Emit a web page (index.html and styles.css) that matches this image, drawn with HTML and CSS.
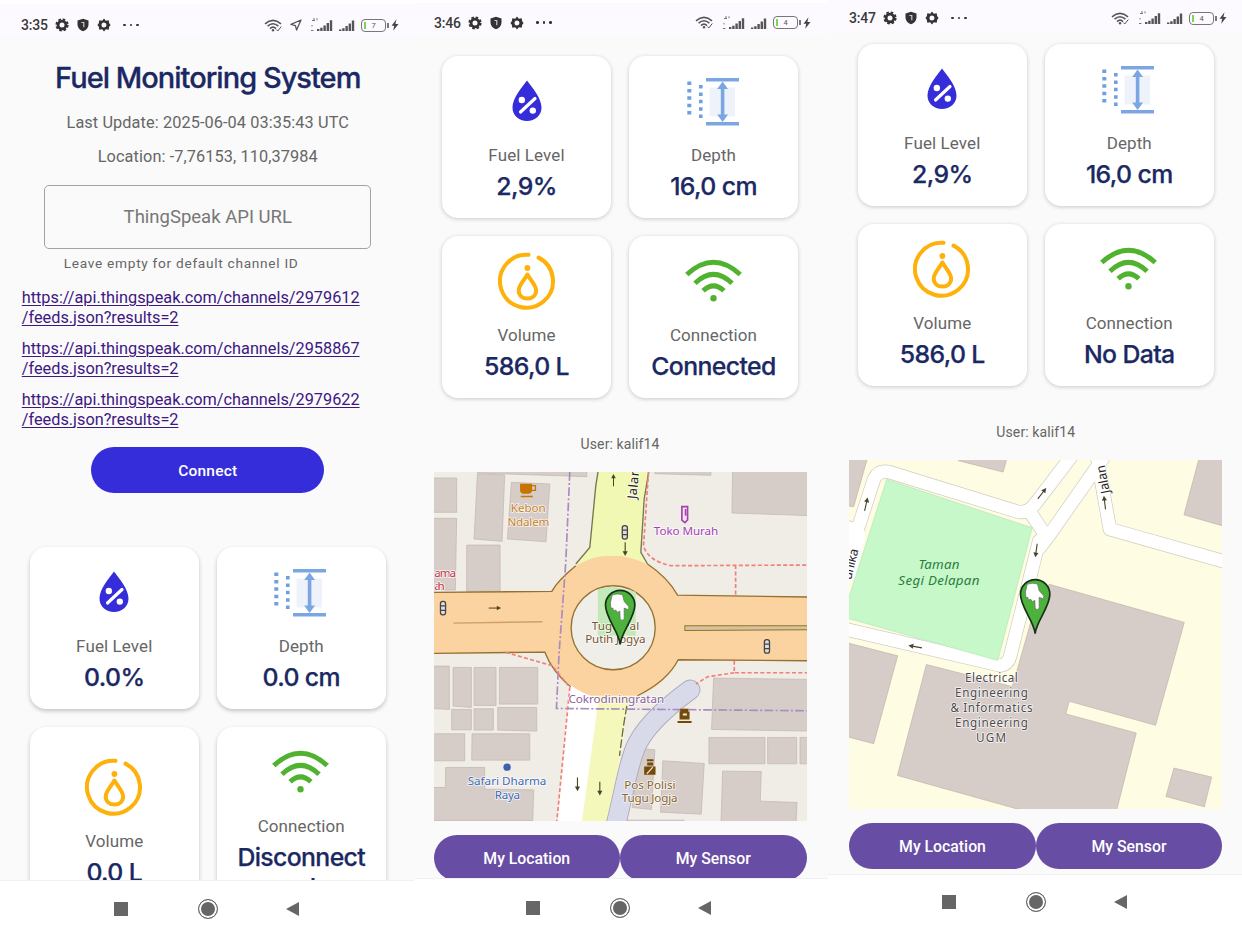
FILE: index.html
```html
<!DOCTYPE html>
<html lang="en">
<head>
<meta charset="utf-8">
<title>Fuel Monitoring System</title>
<link rel="stylesheet" href="styles.css">
</head>
<body>
<svg class="defs" aria-hidden="true">
  <symbol id="cog" viewBox="0 0 14 14"><circle cx="7" cy="7" r="3.900" fill="none" stroke="#333" stroke-width="2.800"/><circle cx="7" cy="7" r="5.700" fill="none" stroke="#333" stroke-width="1.800" stroke-dasharray="2.600 1.880"/></symbol>
  <symbol id="gear" viewBox="0 0 14 14"><path d="M7 .5 8.800 2.700l2.900-.4.5 2.900L13.600 7l-1.400 1.800-.5 2.900-2.900-.4L7 13.500 5.200 11.300l-2.900.4-.5-2.900L.4 7l1.400-1.800.5-2.900 2.900.4zM7 4.500a2.500 2.500 0 1 0 0 5 2.500 2.500 0 0 0 0-5z" fill="#333" fill-rule="evenodd"/></symbol>
  <symbol id="shield" viewBox="0 0 14 14"><path d="M7 .8 12.500 2.600v4.200c0 3-2.300 5.300-5.500 6.500C3.800 12.100 1.500 9.800 1.500 6.800V2.600z" fill="#333"/><path d="M5.400 4.500h2.400v4.800" fill="none" stroke="#ccc" stroke-width="1.200"/></symbol>
  <symbol id="wifi-small" viewBox="0 0 19 13"><g fill="none" stroke="#555" stroke-width="1.600"><path d="M1 4.800Q9-1.900 17 4.800"/><path d="M3.600 7.200Q9 2.300 14.400 7.200"/><path d="M6 9.600Q9 6.800 12 9.600"/><path d="M12.300 10.500l1.500 1.500 3.500-4.500" stroke-width="1"/></g><circle cx="9" cy="11.300" r="1.200" fill="#555"/></symbol>
  <symbol id="arrow-nav" viewBox="0 0 12 12"><path d="M11 1 1 5.400l4.400 1.200L6.600 11z" fill="none" stroke="#555" stroke-width="1.300" stroke-linejoin="round"/></symbol>
  <symbol id="signal-4g" viewBox="0 0 22 14"><path d="M6 13v-2h2.400v2zm3.200 0V9.700h2.400V13zm3.200 0V7.500h2.400V13zm3.200 0V5h2.400v8zm3.200 0V2.200h2.400V13z" fill="#555"/><path d="M3 0v2.500M1 2.500h3M6 .3v2M1 7v1.500M0 12.500h2.500" stroke="#777" fill="none"/></symbol>
  <symbol id="signal" viewBox="0 0 16 14"><path d="M0 13v-1.500h2.400V13zm3.200 0v-2.800h2.400V13zm3.200 0V8h2.400v5zm3.200 0V5.500h2.400V13zm3.200 0V2.500h2.400V13z" fill="#555"/></symbol>
  <symbol id="bolt" viewBox="0 0 8 12"><path d="M5.500.3.5 6.700h2.700L2.200 11.700 7.500 5H4.400z" fill="#444"/></symbol>
  <symbol id="drop" viewBox="0 0 58 58"><path d="M29 8.500C34 15.300 43.500 26 43.500 35.500 43.500 43.500 37 49 29 49S14.500 43.500 14.500 35.500C14.500 26 24 15.300 29 8.500z" fill="#352cda"/><path d="M22.500 40 37 26.500" stroke="#fff" stroke-width="3.200" stroke-linecap="round"/><circle cx="23.800" cy="28" r="3.200" fill="#fff"/><circle cx="34.800" cy="38.600" r="3.200" fill="#fff"/></symbol>
  <symbol id="depth" viewBox="0 0 58 58"><g transform="translate(-1 .5)"><path d="M25.500 15h25.500v29H25.500z" fill="#eef2fb"/><path d="M22 7.300h33M22 51.300h33" stroke="#7ba6e2" stroke-width="3.400"/><path d="M38.600 13v33" stroke="#7ba6e2" stroke-width="3.600"/><path d="M38.600 9 44 16.500H33.200zM38.600 49.500 44 42H33.200z" fill="#7ba6e2"/><path d="M5.300 9v35" stroke="#6f9fdf" stroke-width="4" stroke-dasharray="3.500 3.900"/><path d="M16.800 12.500v35" stroke="#6f9fdf" stroke-width="3.600" stroke-dasharray="3.500 3.900"/></g></symbol>
  <symbol id="volume" viewBox="0 0 58 58"><g fill="none" stroke="#fdb10a" stroke-width="4" stroke-linecap="round"><path d="M30.500 2.800A26.500 26.500 0 1 0 40.500 5.600" /><path d="M29.400 22.500C26 28.500 20.700 33.400 20.700 38.500c0 5 3.900 8 8.700 8s8.700-3 8.700-8c0-5.100-5.300-10-8.700-16z" stroke-linejoin="round"/></g><circle cx="29.400" cy="16" r="2.900" fill="#fdb10a"/></symbol>
  <symbol id="wifi" viewBox="0 0 58 58"><g fill="none" stroke="#50b22f" stroke-width="5"><path d="M1.800 22.500Q28.500-2 55.200 22.500"/><path d="M10 31.300Q28.500 13.500 47 31.300"/><path d="M18.100 38.800Q28.500 29 38.900 38.800"/></g><circle cx="28.500" cy="46.300" r="3.200" fill="#50b22f"/></symbol>
  <symbol id="pin" viewBox="0 0 94 168" overflow="visible"><path d="M47 165C44 128 3 86 3 47a44 44 0 0 1 88 0C91 86 50 128 47 165z" fill="#4cb23c" stroke="#16301a" stroke-width="5"/><path d="M23 17Q38 11 54 16L59 36 73 52 72 61 59 56V88Q53 97 47 88L46 65 39 69 34 62 27 64 25 56 19 56 18 40z" fill="#fff" stroke="#666" stroke-width="2" stroke-linejoin="round"/></symbol>
  <symbol id="way" viewBox="0 0 44 20" overflow="visible"><path d="M0 10h36" stroke-width="3.500" stroke="#4a4428"/><path d="M28 2 43 10 28 18z" fill="#4a4428"/></symbol>
  <symbol id="light" viewBox="0 0 20 46" overflow="visible"><rect x="2" y="2" width="16" height="42" rx="7" fill="#ddd" stroke="#444" stroke-width="4"/><path d="M3 16h14M3 30h14" stroke="#444" stroke-width="4"/></symbol>
</svg>

<main class="board">
  <section class="phone phone-setup">
    <header class="status">
      <span class="clock">3:35</span>
      <svg class="s-icon"><use href="#cog"/></svg><svg class="s-icon"><use href="#shield"/></svg><svg class="s-icon"><use href="#gear"/></svg>
      <span class="dots"><i></i><i></i><i></i></span>
      <span class="right"><svg class="s-wifi"><use href="#wifi-small"/></svg><svg class="s-nav"><use href="#arrow-nav"/></svg><svg class="s-4g"><use href="#signal-4g"/></svg><svg class="s-sig"><use href="#signal"/></svg><span class="battery">7</span><svg class="s-bolt"><use href="#bolt"/></svg></span>
    </header>
    <div class="screen">
      <h1 class="title">Fuel Monitoring System</h1>
      <p class="meta update">Last Update: 2025-06-04 03:35:43 UTC</p>
      <p class="meta place">Location: -7,76153, 110,37984</p>
      <div class="field">ThingSpeak API URL</div>
      <p class="helper">Leave empty for default channel ID</p>
      <nav class="links">
        <a href="#">https://api.thingspeak.com/channels/2979612<br>/feeds.json?results=2</a>
        <a href="#">https://api.thingspeak.com/channels/2958867<br>/feeds.json?results=2</a>
        <a href="#">https://api.thingspeak.com/channels/2979622<br>/feeds.json?results=2</a>
      </nav>
      <button class="connect">Connect</button>
      <div class="cards">
        <article class="card"><svg class="icon"><use href="#drop"/></svg><span class="label">Fuel Level</span><strong class="value">0.0%</strong></article>
        <article class="card"><svg class="icon"><use href="#depth"/></svg><span class="label">Depth</span><strong class="value">0.0 cm</strong></article>
        <article class="card"><svg class="icon"><use href="#volume"/></svg><span class="label">Volume</span><strong class="value">0.0 L</strong></article>
        <article class="card"><svg class="icon"><use href="#wifi"/></svg><span class="label">Connection</span><strong class="value">Disconnect<br>ed</strong></article>
      </div>
    </div>
    <footer class="navbar"><i class="square"></i><i class="home"></i><i class="back"></i></footer>
  </section>

  <section class="phone phone-connected">
    <header class="status">
      <span class="clock">3:46</span>
      <svg class="s-icon"><use href="#cog"/></svg><svg class="s-icon"><use href="#shield"/></svg><svg class="s-icon"><use href="#gear"/></svg>
      <span class="dots"><i></i><i></i><i></i></span>
      <span class="right"><svg class="s-wifi"><use href="#wifi-small"/></svg><svg class="s-4g"><use href="#signal-4g"/></svg><svg class="s-sig"><use href="#signal"/></svg><span class="battery">4</span><svg class="s-bolt"><use href="#bolt"/></svg></span>
    </header>
    <div class="screen">
      <div class="cards">
        <article class="card"><svg class="icon"><use href="#drop"/></svg><span class="label">Fuel Level</span><strong class="value">2,9%</strong></article>
        <article class="card"><svg class="icon"><use href="#depth"/></svg><span class="label">Depth</span><strong class="value">16,0 cm</strong></article>
        <article class="card"><svg class="icon"><use href="#volume"/></svg><span class="label">Volume</span><strong class="value">586,0 L</strong></article>
        <article class="card"><svg class="icon"><use href="#wifi"/></svg><span class="label">Connection</span><strong class="value">Connected</strong></article>
      </div>
      <p class="user">User: kalif14</p>
      <svg class="map" viewBox="30 19 1118 1048" preserveAspectRatio="none">
        <rect x="30" y="19" width="1118" height="1048" fill="#f0ede7"/>
        <g fill="#d7cdc8" stroke="#bfb2ac" stroke-width="2">
          <path d="M20 37H98V140H20zM20 158H98L94 373H20zM160 25l82 3-8 199-84-7zM262 50l115 5-11 173-116-8zM128 238H228V377H128zM160 10H488V33L160 22zM692 10H860V29L692 24zM925 10h235v140L923 142z"/>
          <path d="M20 601H76V731L20 728zM87 605h55v120l-55-4zM150 605h66v114h-66zM226 605h115v110H226zM83 731h59v61H83zM150 729h58v64h-58zM221 725h117v71l-117-3zM20 804h102v81H20zM144 804h173v79H143zM65 905h117v65l147 2-3 92H20V965h44z"/>
          <path d="M868 637l290 4v155l-296-5zM854 815h168v79H854zM1030 815h87v79h-87zM1127 815h30v79h-30zM716 885l124 8-9 152-122-6zM648 848l44 4-10 179-58-6zM895 916l116 1-3 89 110 4-3 67H890zM598 1063H780v10H598z"/>
        </g>
        <path d="M437 650H620L560 1070H400z" fill="#fff"/>
        <path d="M525 690H615L598 800 560 1070H473z" fill="#f4f8bb"/>
        <path d="M523 10 515 60 497 245 455 300 670 300 650 260 660 100 675 10z" fill="#f1f8b4"/>
        <path d="M523 10 515 60 497 245 455 295M675 10 660 100 650 260 670 295" fill="none" stroke="#77764d" stroke-width="4"/>
        <path d="M798 672C735 718 660 780 632 850 606 920 598 990 574 1080" fill="none" stroke="#a6a8b8" stroke-width="61" stroke-linecap="round"/>
        <path d="M798 672C735 718 660 780 632 850 606 920 598 990 574 1080" fill="none" stroke="#d8d9e9" stroke-width="56" stroke-linecap="round"/>
        <path d="M608 720 598 780 586 870" stroke="#6b6b3c" stroke-width="4" stroke-dasharray="26 8" fill="none"/>
        <path d="M20 380 383 377A216 216 0 0 1 440 311Q490 275 540 271H590Q635 278 680 301 730 335 760 388L1158 394V585L762 582A216 216 0 0 1 640 690H500Q410 660 362 559L20 563z" fill="#fbd3a0"/>
        <g fill="none" stroke="#94712e" stroke-width="4">
          <path d="M20 380 383 377Q400 345 455 300M670 295Q730 335 760 388L1158 394M1158 585 762 582Q730 645 640 690M20 563 362 559Q385 620 440 663"/>
          <path d="M88 472 355 468" stroke="#caa169"/>
          <circle cx="567" cy="486" r="126" fill="#f0eee9"/>
        </g>
        <path d="M521 370 565 362 635 378V510H521z" fill="#c4e9b8"/>
        <path d="M782 480H1158V492L782 494z" fill="#d5c59f" stroke="#94712e" stroke-width="3"/>
        <path d="M437 19 425 290 405 560 397 728 1148 735" fill="none" stroke="#a98bc0" stroke-width="5" stroke-dasharray="26 7 6 7"/>
        <g fill="none" stroke="#f27f78" stroke-width="5" stroke-dasharray="12 7">
          <path d="M673 19 658 240Q670 285 740 300L1148 298M934 298V388"/>
          <path d="M930 585V621H1148M930 621 850 633 815 655M245 560 385 600 437 665 424 800 398 1067"/>
        </g>
        <use href="#way" x="194" y="417" width="38" height="20"/>
        <use href="#way" width="38" height="20" transform="translate(558 62) rotate(-90)"/>
        <use href="#way" width="42" height="20" transform="translate(612 290) rotate(90) translate(-60 -1)"/>
        <use href="#way" width="42" height="20" transform="translate(470 935) rotate(90)"/>
        <use href="#way" width="42" height="20" transform="translate(537 948) rotate(90)"/>
        <use href="#light" x="47" y="405" width="20" height="44"/><use href="#light" x="592" y="178" width="20" height="44"/><use href="#light" x="1018" y="520" width="20" height="44"/>
        <path d="M288 54h36v4h12v18h-12q-2 8-10 8h-17q-9-2-9-10zM324 62v10h8V62zM290 90h36v5h-36z" fill="#c77400" fill-rule="evenodd"/>
        <path d="M773 123h17v40l-8 8-9-8z" fill="none" stroke="#a93eb5" stroke-width="5"/><path d="M784 130v20" stroke="#a93eb5" stroke-width="5"/>
        <path d="M768 729h24v8h4v24h-30v-24h2zM760 766h42v6h-42zM776 743v6h12v-6z" fill="#734a08" fill-rule="evenodd"/>
        <path d="M668 880h20v6h-20zM669 890h18v9h-18zM660 902h34v25h-34z" fill="#734a08"/><path d="M668 924l18-20" stroke="#eadbc8" stroke-width="4"/>
        <circle cx="249" cy="904" r="11" fill="#3c5faf"/>
        <g class="place-name">
          <text x="260" y="139" textLength="105" fill="#c7832f">Kebon</text><text x="250" y="181" textLength="126" fill="#c7832f">Ndalem</text>
          <text x="31" y="333" textLength="65" fill="#c2374b">ama</text><text x="31" y="374" textLength="31" fill="#c2374b">ah</text>
          <text x="689" y="209" textLength="193" fill="#a43fb3">Toko Murah</text>
          <text x="503" y="493" textLength="142" fill="#735832">Tugu Pal</text><text x="483" y="533" textLength="181" fill="#735832">Putih Jogya</text>
          <text x="433" y="711" textLength="287" fill="#8b629c">Cokrodiningratan</text>
          <text x="131" y="958" textLength="236" fill="#416bb4">Safari Dharma</text><text x="212" y="999" textLength="76" fill="#416bb4">Raya</text>
          <text x="600" y="969" textLength="154" fill="#87632d">Pos Polisi</text><text x="593" y="1009" textLength="167" fill="#87632d">Tugu Jogja</text>
          <text transform="translate(636 101) rotate(-84)" textLength="92" fill="#222" class="road">Jalan</text>
        </g>
        <use href="#pin" x="541" y="371" width="94" height="168"/>
      </svg>
      <div class="actions"><button>My Location</button><button>My Sensor</button></div>
    </div>
    <footer class="navbar"><i class="square"></i><i class="home"></i><i class="back"></i></footer>
  </section>

  <section class="phone phone-nodata">
    <header class="status">
      <span class="clock">3:47</span>
      <svg class="s-icon"><use href="#cog"/></svg><svg class="s-icon"><use href="#shield"/></svg><svg class="s-icon"><use href="#gear"/></svg>
      <span class="dots"><i></i><i></i><i></i></span>
      <span class="right"><svg class="s-wifi"><use href="#wifi-small"/></svg><svg class="s-4g"><use href="#signal-4g"/></svg><svg class="s-sig"><use href="#signal"/></svg><span class="battery">4</span><svg class="s-bolt"><use href="#bolt"/></svg></span>
    </header>
    <div class="screen">
      <div class="cards">
        <article class="card"><svg class="icon"><use href="#drop"/></svg><span class="label">Fuel Level</span><strong class="value">2,9%</strong></article>
        <article class="card"><svg class="icon"><use href="#depth"/></svg><span class="label">Depth</span><strong class="value">16,0 cm</strong></article>
        <article class="card"><svg class="icon"><use href="#volume"/></svg><span class="label">Volume</span><strong class="value">586,0 L</strong></article>
        <article class="card"><svg class="icon"><use href="#wifi"/></svg><span class="label">Connection</span><strong class="value">No Data</strong></article>
      </div>
      <p class="user">User: kalif14</p>
      <svg class="map" viewBox="30 28 1118 1046" preserveAspectRatio="none">
        <rect x="30" y="28" width="1118" height="1046" fill="#fefce2"/>
        <g fill="#d7cdc8" stroke="#bfb1a9" stroke-width="2">
          <path d="M20 20H86L44 168 20 164zM350 20H504L492 64 358 30zM1080 20H1160V228L1034 192zM20 574 176 614 104 877 20 855zM1004 950 1117 977 1095 1066 980 1035z"/>
          <path d="M630 400 1035 514 949 822 690 750 680 788 891 845 830 1085H580L540 1074 175 972 262 640 519 706 533 660 590 460z"/>
        </g>
        <g fill="none" stroke-linejoin="round" stroke-linecap="round">
          <path d="M0 530 485 643Q507 640 513 615L580 350 600 270M40 285 105 85Q118 58 150 64L540 184Q565 186 585 163L710 0M570 180 618 252M600 292 628 256 790 25M770 0 812 235 1170 336M30 300V230" stroke="#cfcbc0" stroke-width="42"/>
          <path d="M0 530 485 643Q507 640 513 615L580 350 600 270M40 285 105 85Q118 58 150 64L540 184Q565 186 585 163L710 0M570 180 618 252M600 292 628 256 790 25M770 0 812 235 1170 336M30 300V230M30 370 60 250" stroke="#fff" stroke-width="38"/>
        </g>
        <path d="M143 86 579 231 476 628 20 500V470z" fill="#c6f8ca" stroke="#b3e5b6" stroke-width="2"/>
        <use href="#way" width="42" height="20" transform="translate(67 178) rotate(-77)"/>
        <use href="#way" width="42" height="20" transform="translate(588 138) rotate(-52)"/>
        <use href="#way" width="42" height="20" transform="translate(604 280) rotate(98)"/>
        <use href="#way" width="42" height="20" transform="translate(789 177) rotate(-97)"/>
        <use href="#way" width="42" height="20" transform="translate(247 600) rotate(190)"/>
        <g class="place-name park"><text x="238" y="353" textLength="123">Taman</text><text x="178" y="403" textLength="243">Segi Delapan</text></g>
        <g class="place-name">
          <g fill="#4d4b50"><text x="378" y="692" textLength="158">Electrical</text><text x="348" y="737" textLength="218">Engineering</text><text x="334" y="781" textLength="246">&amp; Informatics</text><text x="348" y="827" textLength="218">Engineering</text><text x="411" y="872" textLength="90">UGM</text></g>
          <text class="road" transform="translate(812 126) rotate(-101)" textLength="86" fill="#222">Jalan</text>
          <text class="road" transform="translate(36 388) rotate(-76)" textLength="94" fill="#222">unika</text>
        </g>
        <use href="#pin" x="541" y="383" width="94" height="168"/>
      </svg>
      <div class="actions"><button>My Location</button><button>My Sensor</button></div>
    </div>
    <footer class="navbar"><i class="square"></i><i class="home"></i><i class="back"></i></footer>
  </section>
</main>
</body>
</html>
```

FILE: styles.css
```css
* { box-sizing: border-box; }
body { margin: 0; background: #fff; font-family: Roboto, "Liberation Sans", sans-serif; color: #666; }
p, h1 { margin: 0; }
button { border: 0; padding: 1px 0 0; font: 500 15.800px Roboto, sans-serif; color: #fff; }
.defs { position: absolute; width: 0; height: 0; }
.board { display: flex; width: 1242px; height: 936px; overflow: hidden; }
.phone { width: 414px; height: 936px; display: flex; flex-direction: column; overflow: hidden; }
.status { display: flex; align-items: center; height: 33px; margin-top: 4px; padding: 9px 15px 0 21px; background: #fdfaff; flex: none; }
.clock { width: 34px; font-size: 14px; font-weight: 500; color: #3a3a3a; letter-spacing: -.2px; }
.s-icon { width: 14px; height: 14px; margin-right: 7px; }
.dots { display: flex; gap: 4px; margin-left: 5px; }
.dots i { width: 2.5px; height: 2.5px; border-radius: 50%; background: #333; }
.right { display: flex; align-items: center; margin-left: auto; }
.s-wifi { width: 19px; height: 13px; margin-right: 9px; }
.phone-setup .s-wifi { margin-right: 7px; }
.s-nav { width: 12px; height: 12px; margin-right: 9px; }
.s-4g { width: 22px; height: 14px; margin-right: 6px; }
.s-sig { width: 16px; height: 14px; margin-right: 6px; }
.battery { position: relative; width: 25px; height: 13px; margin-right: 5px; border: 1.5px solid #777; border-radius: 4px; font-size: 7.500px; line-height: 11px; text-align: center; color: #555; }
.battery::before { content: ""; position: absolute; left: 2px; top: 2px; width: 2px; height: 7px; background: #79d957; }
.battery::after { content: ""; position: absolute; right: -4px; top: 3px; width: 2px; height: 5px; background: #777; }
.s-bolt { width: 8px; height: 12px; }

.screen { flex: 1; min-height: 0; overflow: hidden; display: flex; flex-direction: column; align-items: center; padding-left: 1.5px; background: #fafafa; border-bottom: 1px solid #f0f0f0; }
.screen > * { flex: none; }
.title { margin-top: 21px; font: 500 29px/40px Inter, sans-serif; letter-spacing: -.98px; -webkit-text-stroke: .3px #1a2863; color: #1a2863; white-space: nowrap; }
.meta { font-size: 16.3px; line-height: 22px; letter-spacing: .1px; }
.update { margin-top: 14px; }
.place { margin-top: 12px; }
.field { width: 327px; height: 64px; margin-top: 17px; border: 1px solid #a3a3a6; border-radius: 5px; text-align: center; font-size: 18.5px; line-height: 62px; color: #777; }
.helper { width: 288px; margin-top: 6px; font-size: 13.700px; line-height: 16px; letter-spacing: .7px; }
.links { width: 372px; margin-top: 17px; display: flex; flex-direction: column; gap: 12px; }
.links a { font-size: 16.3px; line-height: 19.5px; letter-spacing: 0; color: #3d1782; text-underline-offset: 2px; text-decoration-thickness: 1px; white-space: nowrap; }
.connect { width: 233px; height: 46px; margin-top: 18px; border-radius: 23px; background: #352cda; font-size: 15.500px; letter-spacing: .2px; }

.cards { display: grid; grid-template-columns: 169px 169px; gap: 18px; }
.phone-setup .cards { margin-top: 53.500px; }
.card { min-height: 162px; padding: 16px 10px 17px; display: flex; flex-direction: column; align-items: center; justify-content: center; border-radius: 16px; background: #fff; box-shadow: 0 1px 4px rgba(0, 0, 0, .2); }
.phone-setup .card { box-shadow: 0 2px 4px rgba(0, 0, 0, .22); }
.icon { width: 58px; height: 58px; }
.label { margin-top: 14px; font-size: 17px; line-height: 22px; letter-spacing: .1px; }
.value { margin-top: 5px; font: 500 24.800px/30px Inter, sans-serif; letter-spacing: -.62px; -webkit-text-stroke: .25px #1a2863; color: #1a2863; text-align: center; white-space: nowrap; }
.user { margin-top: 35px; font-size: 14px; line-height: 22px; letter-spacing: .1px; }
.map { display: block; width: 373px; height: 349.500px; margin-top: 16.500px; }
.actions { display: flex; width: 373px; margin-top: 14px; }
.actions button { flex: 1; height: 46px; border-radius: 23px; background: #674da3; }
.place-name text { font-family: "Noto Sans", sans-serif; font-size: 35px; stroke: rgba(255, 255, 255, .75); stroke-width: 5px; paint-order: stroke; }
.place-name .road { font-size: 38px; }
.park text { font-size: 40px; font-style: italic; fill: #2b7d3a; stroke: none; }

.navbar { display: flex; align-items: center; height: 55px; padding-left: 113.500px; background: #fff; flex: none; }
.square { width: 14px; height: 14px; background: #666; }
.home { width: 20px; height: 20px; margin-left: 70px; border: 1.5px solid #666; border-radius: 50%; background: #666; box-shadow: inset 0 0 0 2px #fff; }
.back { margin-left: 68px; border: solid transparent; border-width: 7.500px 13px 7.500px 0; border-right-color: #666; }

.phone-connected .status { margin-top: 3px; height: 32px; padding-top: 7px; padding-left: 20px; padding-right: 17px; }
.phone-connected .screen { padding: 21px 2px 0 0; }
.phone-connected .navbar { height: 57px; padding-left: 112px; }
.phone-nodata .status { margin-top: 0; height: 31px; padding-top: 5px; }
.phone-nodata .screen { padding-top: 13px; }
.phone-nodata .navbar { height: 61px; padding-bottom: 7px; }
```
